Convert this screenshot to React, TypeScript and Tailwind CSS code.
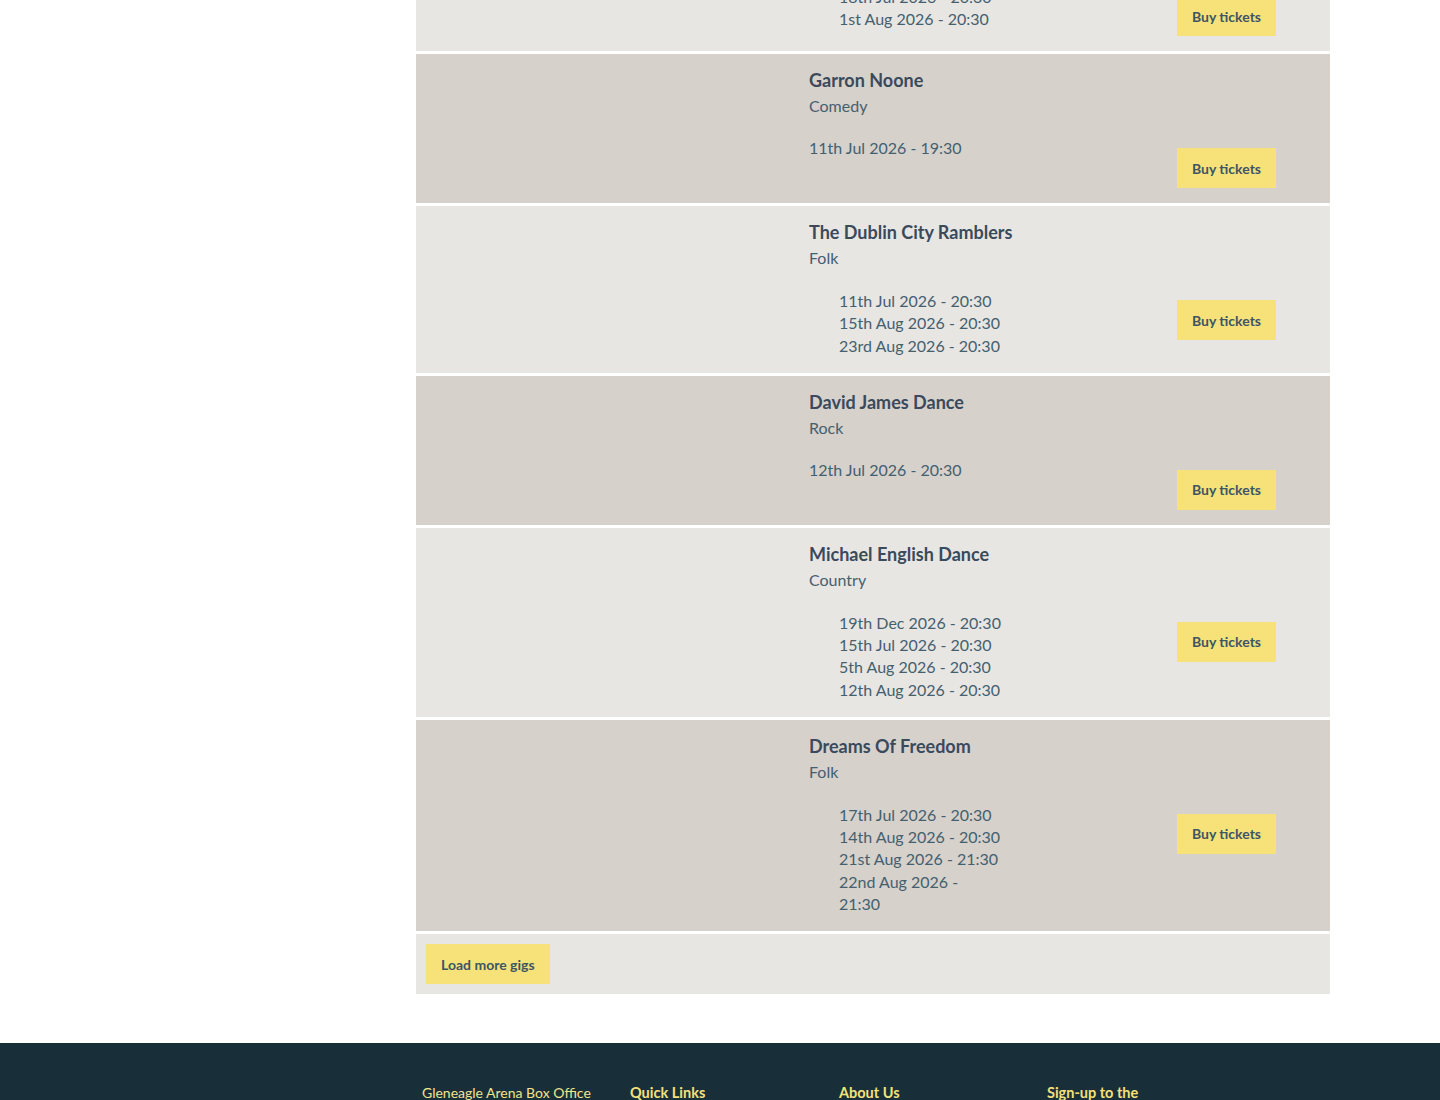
import React from 'react';

type Gig = {
  name: string;
  genre: string;
  dates: string[];
};

const gigs: Gig[] = [
  { name: 'Mundy', genre: 'Folk', dates: ['18th Jul 2026 - 20:30', '1st Aug 2026 - 20:30'] },
  { name: 'Garron Noone', genre: 'Comedy', dates: ['11th Jul 2026 - 19:30'] },
  {
    name: 'The Dublin City Ramblers',
    genre: 'Folk',
    dates: ['11th Jul 2026 - 20:30', '15th Aug 2026 - 20:30', '23rd Aug 2026 - 20:30'],
  },
  { name: 'David James Dance', genre: 'Rock', dates: ['12th Jul 2026 - 20:30'] },
  {
    name: 'Michael English Dance',
    genre: 'Country',
    dates: ['19th Dec 2026 - 20:30', '15th Jul 2026 - 20:30', '5th Aug 2026 - 20:30', '12th Aug 2026 - 20:30'],
  },
  {
    name: 'Dreams Of Freedom',
    genre: 'Folk',
    dates: [
      '17th Jul 2026 - 20:30',
      '14th Aug 2026 - 20:30',
      '21st Aug 2026 - 21:30',
      '22nd Aug 2026 - 21:30',
    ],
  },
];

const GigRow: React.FC<{ gig: Gig; shaded: boolean }> = ({ gig, shaded }) => {
  return (
    <div className={`flex ${shaded ? 'bg-[#d6d1cb]' : 'bg-[#e8e6e3]'}`}>
      {/* poster slot, image not loaded */}
      <div className="w-[393px] shrink-0" />

      <div className="flex-1 pt-[13px] pb-4">
        <h3 className="text-[18px] leading-[27px] font-bold text-[#3a4a5b]">{gig.name}</h3>
        <p className="text-[16px] leading-[24px] text-[#44606f]">{gig.genre}</p>
        {gig.dates.length === 1 ? (
          <p className="mt-[19px] text-[16px] leading-[22px] text-[#44606f]">{gig.dates[0]}</p>
        ) : (
          <ul className="mt-[20px] pl-[30px] w-[192px] text-[16px] leading-[22.25px] text-[#44606f]">
            {gig.dates.map((d) => (
              <li key={d}>{d}</li>
            ))}
          </ul>
        )}
      </div>

      <div className="pt-[94px] pb-[15px] pr-[54px]">
        <button className="h-10 px-[15px] bg-[#f7e27a] text-[14px] font-bold text-[#3d5566] whitespace-nowrap">
          Buy tickets
        </button>
      </div>
    </div>
  );
};

export default function App() {
  return (
    <div className="min-h-[1100px] bg-white font-['Lato','Liberation_Sans',sans-serif] overflow-hidden">
      {/* page is scrolled part way down the gig listing */}
      <div className="flex -mt-[98px]">
        <aside className="w-[416px] shrink-0" />
        <main className="w-[914px] flex flex-col gap-[3px]">
          {gigs.map((g, i) => (
            <GigRow key={g.name} gig={g} shaded={i % 2 === 1} />
          ))}
          <div className="bg-[#e8e6e3] p-[10px]">
            <button className="h-10 px-[15px] bg-[#f7e27a] text-[14px] font-bold text-[#3d5566]">
              Load more gigs
            </button>
          </div>
        </main>
      </div>

      <footer className="mt-[49px] bg-[#182f3a] pt-[43px] pb-10">
        <div className="pl-[422px] grid grid-cols-[208px_209px_208px_208px]">
          <div className="text-[14px] leading-[14px] text-[#f3e38a]">Gleneagle Arena Box Office</div>
          <div className="text-[14.5px] leading-[14px] font-bold text-[#f5e07a]">Quick Links</div>
          <div className="text-[14.5px] leading-[14px] font-bold text-[#f5e07a]">About Us</div>
          <div className="text-[14.5px] leading-[14px] font-bold text-[#f5e07a]">Sign-up to the</div>
        </div>
      </footer>
    </div>
  );
}
